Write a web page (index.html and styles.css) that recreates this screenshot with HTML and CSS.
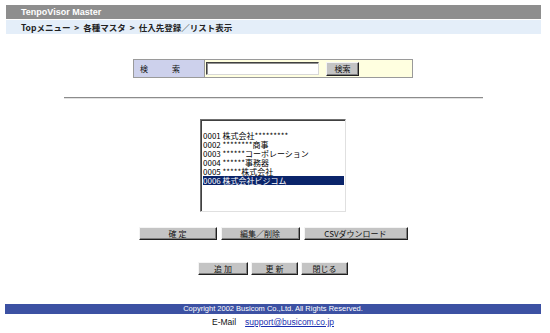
FILE: index.html
```html
<!DOCTYPE html>
<html lang="ja">
<head>
<meta charset="utf-8">
<title>TenpoVisor Master</title>
<link rel="stylesheet" href="styles.css">
</head>
<body>
<div class="page">
  <div class="titlebar">TenpoVisor Master</div>
  <div class="crumb">Topメニュー &gt; 各種マスタ &gt; 仕入先登録／リスト表示</div>

  <div class="search">
    <div class="search-label"><span>検</span><span>索</span></div>
    <div class="search-body">
      <div class="input"></div>
      <div class="btn search-btn">検索</div>
    </div>
  </div>

  <div class="rule"></div>

  <div class="listbox">
    <div class="opt"></div>
    <div class="opt">0001 株式会社*********</div>
    <div class="opt">0002 ********商事</div>
    <div class="opt">0003 ******コーポレーション</div>
    <div class="opt">0004 ******事務器</div>
    <div class="opt">0005 *****株式会社</div>
    <div class="opt sel">0006 株式会社ビジコム</div>
  </div>

  <div class="btnrow row1">
    <div class="btn b-kakutei">確 定</div>
    <div class="btn b-edit">編集／削除</div>
    <div class="btn b-csv">CSVダウンロード</div>
  </div>

  <div class="btnrow row2">
    <div class="btn b-add">追 加</div>
    <div class="btn b-upd">更 新</div>
    <div class="btn b-upd">閉じる</div>
  </div>

  <div class="footer">Copyright 2002 Busicom Co.,Ltd. All Rights Reserved.</div>
  <div class="mail"><span class="mail-label">E-Mail</span><a class="mail-link" href="#">support@busicom.co.jp</a></div>
</div>
</body>
</html>
```

FILE: styles.css
```css
html, body {
  margin: 0;
  padding: 0;
  background: #ffffff;
}

body {
  font-family: "Noto Sans CJK JP", "Liberation Sans", sans-serif;
  color: #111;
}

.page {
  width: 536px;
  margin-left: 5px;
  padding-top: 5px;
}

.titlebar {
  margin-left: 1px;
  height: 14px;
  line-height: 14px;
  background: #8e8e8e;
  color: #ffffff;
  font-family: "Liberation Sans", sans-serif;
  font-weight: bold;
  font-size: 9px;
  padding-left: 15px;
}

.crumb {
  margin-top: 1px;
  margin-left: 1px;
  height: 14px;
  line-height: 14px;
  background: #e4eef9;
  font-size: 8.5px;
  font-weight: bold;
  color: #222;
  padding-left: 15px;
  white-space: nowrap;
  word-spacing: 2px;
}

.search {
  margin: 25px auto 0;
  width: 280px;
  height: 19px;
  box-sizing: border-box;
  border: 1px solid #9a9a9a;
  display: flex;
}

.search-label {
  width: 71px;
  background: #cdd1ec;
  border-right: 1px solid #9a9a9a;
  display: flex;
  align-items: center;
  font-size: 8px;
  padding-left: 6px;
  gap: 24px;
  box-sizing: border-box;
}

.search-body {
  flex: 1;
  background: #ffffe0;
  display: flex;
  align-items: center;
  padding-left: 1px;
}

.input {
  width: 113px;
  height: 13px;
  box-sizing: border-box;
  background: #fff;
  border-style: solid;
  border-width: 1px;
  border-color: #404040 #d8d8d8 #d8d8d8 #404040;
  box-shadow: inset 1px 1px 0 #909090;
}

.btn {
  box-sizing: border-box;
  background: #c4c4c4;
  border-style: solid;
  border-width: 1px;
  border-color: #f4f4f4 #202020 #202020 #f4f4f4;
  box-shadow: inset -1px -1px 0 #808080;
  font-size: 8px;
  color: #111;
  display: flex;
  align-items: center;
  justify-content: center;
  white-space: nowrap;
}

.search-btn {
  margin-left: 7px;
  width: 33px;
  height: 14px;
}

.rule {
  margin: 19px auto 0;
  width: 419px;
  border-top: 1px solid #8c8c8c;
  border-bottom: 1px solid #e2e2e2;
}

.listbox {
  margin: 20px auto 0;
  width: 146px;
  height: 93px;
  box-sizing: border-box;
  border-style: solid;
  border-width: 1px;
  border-color: #707070 #e0e0e0 #e0e0e0 #707070;
  box-shadow: inset 1px 1px 0 #404040;
  padding: 2px 0 0 2px;
  background: #fff;
  font-size: 8px;
  overflow: hidden;
}

.opt {
  height: 9px;
  line-height: 9px;
  white-space: nowrap;
  color: #000;
  overflow: hidden;
}

.opt.sel {
  background: #0a246a;
  color: #fff;
  margin-right: 1px;
}

.btnrow {
  display: flex;
  justify-content: center;
  height: 13px;
}

.btnrow .btn {
  height: 13px;
}

.row1 {
  margin-top: 15px;
  gap: 4px;
}

.row2 {
  margin-top: 22px;
  gap: 3px;
}

.b-kakutei { width: 78px; }
.b-edit { width: 79px; }
.b-csv { width: 104px; }
.b-add { width: 50px; }
.b-upd { width: 47px; }

.footer {
  margin-top: 29px;
  height: 10px;
  line-height: 10px;
  background: #3c51a3;
  color: #fff;
  font-family: "Liberation Sans", sans-serif;
  font-size: 7.5px;
  text-align: center;
}

.mail {
  margin-top: 2px;
  height: 12px;
  line-height: 12px;
  text-align: center;
  font-family: "Liberation Sans", sans-serif;
  font-size: 8.5px;
  color: #111;
}

.mail-label {
  margin-right: 9px;
}

.mail-link {
  color: #1a2fb0;
  text-decoration: underline;
}
```
